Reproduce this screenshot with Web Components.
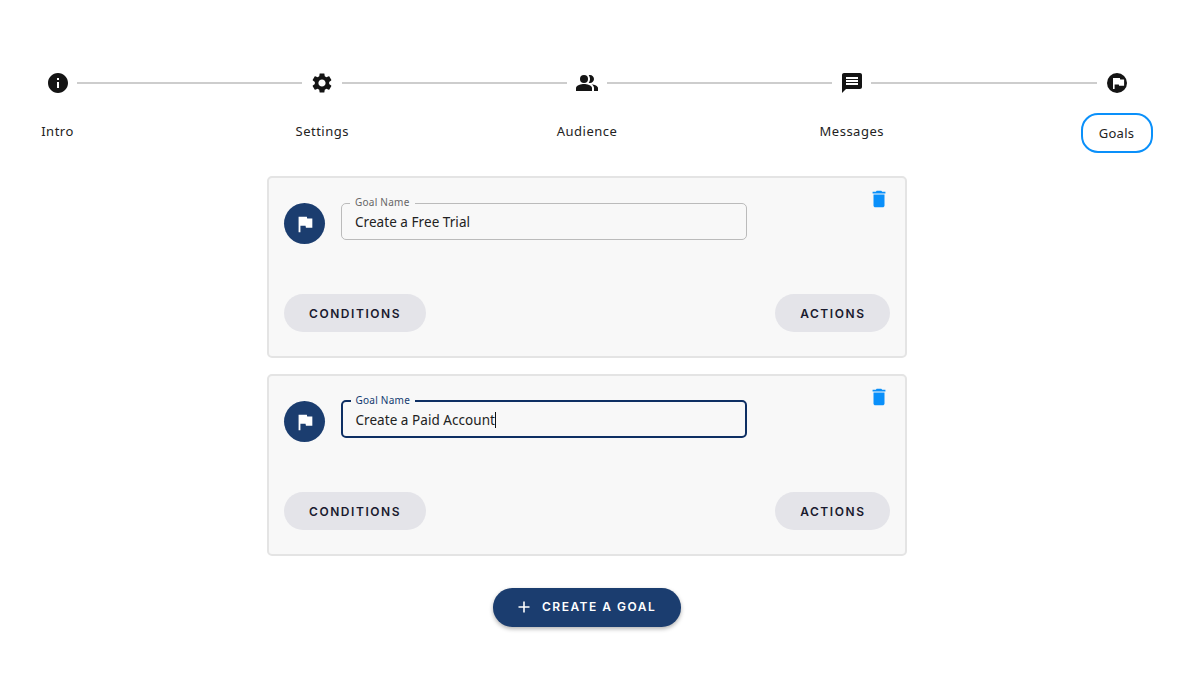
<!DOCTYPE html>
<html lang="en"><head><meta charset="utf-8"><title>Goals</title>
<style>
html,body{margin:0;padding:0;background:#fff;height:100%;overflow:hidden}
body{font-family:"Inter","Liberation Sans",sans-serif;color:#1a1a1a}
</style></head><body>
<goals-page>
  <step-bar>
    <step-item icon="info" label="Intro"></step-item>
    <step-item icon="settings" label="Settings"></step-item>
    <step-item icon="people" label="Audience"></step-item>
    <step-item icon="message" label="Messages"></step-item>
    <step-item icon="goal" label="Goals" active></step-item>
  </step-bar>
  <goal-list>
    <goal-card value="Create a Free Trial"></goal-card>
    <goal-card value="Create a Paid Account" focused></goal-card>
  </goal-list>
  <create-button>CREATE A GOAL</create-button>
</goals-page>
<script>
const P={
info:'<path d="M12 2C6.48 2 2 6.48 2 12s4.48 10 10 10 10-4.48 10-10S17.52 2 12 2zm1 15h-2v-6h2v6zm0-8h-2V7h2v2z"/>',
settings:'<path d="M19.14 12.94c.04-.3.06-.61.06-.94 0-.32-.02-.64-.07-.94l2.03-1.58c.18-.14.23-.41.12-.61l-1.92-3.32c-.12-.22-.37-.29-.59-.22l-2.39.96c-.5-.38-1.03-.7-1.62-.94l-.36-2.54c-.04-.24-.24-.41-.48-.41h-3.84c-.24 0-.43.17-.47.41l-.36 2.54c-.59.24-1.13.57-1.62.94l-2.39-.96c-.22-.08-.47 0-.59.22L2.74 8.87c-.12.21-.08.47.12.61l2.03 1.58c-.05.3-.09.63-.09.94s.02.64.07.94l-2.03 1.58c-.18.14-.23.41-.12.61l1.92 3.32c.12.22.37.29.59.22l2.39-.96c.5.38 1.03.7 1.62.94l.36 2.54c.05.24.24.41.48.41h3.84c.24 0 .44-.17.47-.41l.36-2.54c.59-.24 1.13-.56 1.62-.94l2.39.96c.22.08.47 0 .59-.22l1.92-3.32c.12-.22.07-.47-.12-.61l-2.01-1.58zM12 15.6c-1.98 0-3.6-1.62-3.6-3.6s1.62-3.6 3.6-3.6 3.6 1.62 3.6 3.6-1.62 3.6-3.6 3.6z"/>',
people:'<path d="M16.67 13.13C18.04 14.06 19 15.32 19 17v3h4v-3c0-2.18-3.57-3.47-6.33-3.87z"/><circle cx="9" cy="8" r="4"/><path d="M15 12c2.21 0 4-1.79 4-4s-1.79-4-4-4c-.47 0-.91.1-1.33.24C14.5 5.27 15 6.58 15 8s-.5 2.73-1.33 3.76c.42.14.86.24 1.33.24z"/><path d="M9 13c-2.67 0-8 1.34-8 4v3h16v-3c0-2.66-5.33-4-8-4z"/>',
message:'<path d="M20 2H4c-1.1 0-1.99.9-1.99 2L2 22l4-4h14c1.1 0 2-.9 2-2V4c0-1.1-.9-2-2-2zm-2 12H6v-2h12v2zm0-3H6V9h12v2zm0-3H6V6h12v2z"/>',
goal:'<circle cx="12" cy="12" r="10"/><path fill="#fff" d="M15.2 8.4l-.3-1.4H8v11h1.6v-4.6h4.2l.3 1.4h5V8.4z"/>',
trash:'<path d="M6 19c0 1.1.9 2 2 2h8c1.1 0 2-.9 2-2V7H6v12zM19 4h-3.5l-1-1h-5l-1 1H5v2h14V4z"/>',
flag:'<path d="M14.4 6L14 4H5v17h2v-7h5.6l.4 2h7V6z"/>'
};
const svg=(n,s)=>`<svg width="${s}" height="${s}" viewBox="0 0 24 24" fill="currentColor" aria-hidden="true">${P[n]}</svg>`;
class Base extends HTMLElement{
  constructor(){super();this.attachShadow({mode:'open'})}
  connectedCallback(){this.shadowRoot.innerHTML=this.render()}
}
customElements.define('goals-page',class extends Base{render(){return `<style>
:host{display:flex;flex-direction:column;box-sizing:border-box;width:1200px;height:685px;padding-top:71px}
</style><slot></slot>`}});
customElements.define('step-bar',class extends Base{render(){return `<style>
:host{display:flex;padding:0 71.5px 0 45.5px;margin-bottom:22.5px;justify-content:space-between}
</style><slot></slot>`}});
customElements.define('step-item',class extends Base{render(){
  const a=this.hasAttribute('active');
  const last=this.matches(':last-child');
  return `<style>
:host{display:grid;grid-template-columns:24px 1fr;${last?'flex:0 0 24px':'flex:1 1 0'};grid-template-rows:24px 40px;row-gap:18px}
.i{color:#141414;line-height:0}
.line{align-self:center;height:2px;background:#cdcdcd;margin:0 8px 0 7.5px}
.lw{display:flex;justify-content:center;width:24px;grid-column:1;grid-row:2;overflow:visible}
.l{flex:none;font:400 13px/17px "Noto Sans","Liberation Sans",sans-serif;letter-spacing:.5px;color:#222;white-space:nowrap;padding-top:10px}
.l.a{box-sizing:border-box;width:72px;height:40px;border:2.5px solid #0a90fa;border-radius:17px;padding-top:9.5px;text-align:center;letter-spacing:.3px;line-height:17px}
</style><div class="i">${svg(this.getAttribute('icon'),24)}</div>${last?'':'<div class="line"></div>'}
<div class="lw"><div class="l${a?' a':''}">${this.getAttribute('label')}</div></div>`}});
customElements.define('goal-list',class extends Base{render(){return `<style>
:host{display:flex;flex-direction:column;gap:16px;width:640px;margin:0 0 32.5px 267px}
</style><slot></slot>`}});
customElements.define('goal-field',class extends Base{render(){
  const f=this.hasAttribute('focused');
  return `<style>
:host{display:block;flex:none;width:406px;color:${f?'#123a70':'#666'}}
fieldset{box-sizing:border-box;margin:-6px 0 0;height:43px;padding:0 0 0 ${f?7.5:8}px;border:${f?'2px':'1.5px'} solid ${f?'#0e2f63':'#bbb'};border-radius:5px;min-width:0}
legend{padding:0 5px;font:400 10px/12px "Noto Sans","Liberation Sans",sans-serif;letter-spacing:.25px;color:inherit;transform:translateY(-1.5px)}
.v{font:400 13.5px/20px "Noto Sans","Liberation Sans",sans-serif;letter-spacing:.05px;color:#222;padding-left:5px;white-space:nowrap;margin-top:3px}
.c{display:inline-block;width:1px;height:16px;background:#111;vertical-align:-3px}
</style><fieldset><legend>Goal Name</legend><div class="v">${this.getAttribute('value')}${f?'<span class="c"></span>':''}</div></fieldset>`}});
customElements.define('pill-button',class extends Base{render(){return `<style>
:host{display:inline-flex;align-items:center;box-sizing:border-box;height:38px;padding:1px 24.5px 0 25px;border-radius:19px;background:#e4e4e9;color:#1a1a2e;font:600 12px/1 "Inter","Liberation Sans",sans-serif;letter-spacing:1.55px}
</style><slot></slot>`}});
customElements.define('goal-card',class extends Base{render(){
  const f=this.hasAttribute('focused');
  return `<style>
:host{display:flex;flex-direction:column;box-sizing:border-box;height:182px;background:#f8f8f8;border:2px solid #e4e4e4;border-radius:5px;padding:10.5px 15px 23.5px 15px;justify-content:space-between}
.h{display:flex;align-items:flex-start}
.a{flex:none;width:41px;height:41px;border-radius:50%;background:#1b3d6f;color:#fff;display:flex;align-items:center;justify-content:center;margin:15px 16px 0 0}
goal-field{margin-top:15px}
.t{margin-left:auto;color:#0a90fa;line-height:0}
.b{display:flex;justify-content:space-between}
</style><div class="h"><div class="a">${svg('flag',22)}</div><goal-field value="${this.getAttribute('value')}" ${f?'focused':''}></goal-field><div class="t">${svg('trash',22)}</div></div>
<div class="b"><pill-button>CONDITIONS</pill-button><pill-button>ACTIONS</pill-button></div>`}});
customElements.define('create-button',class extends Base{render(){return `<style>
:host{display:flex;align-items:center;align-self:flex-start;box-sizing:border-box;margin-left:493px;width:188px;height:38.5px;padding-left:25px;gap:12px;border-radius:19.25px;background:#1b3d6f;color:#fff;font:600 12px/1 "Inter","Liberation Sans",sans-serif;letter-spacing:1.5px;box-shadow:0 2px 4px rgba(0,0,0,.3)}
svg{flex:none}
</style><svg width="12" height="12" viewBox="0 0 12 12" fill="none" stroke="#fff" stroke-width="1.6"><path d="M6 .5v11M.5 6h11"/></svg><slot></slot>`}});
</script>
</body></html>
